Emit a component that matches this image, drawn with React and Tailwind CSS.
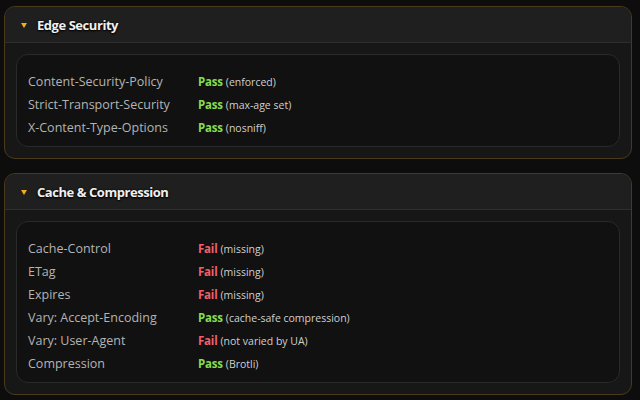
import React from 'react';

const sections = [
    {
        title: 'Edge Security',
        rows: [
            { label: 'Content-Security-Policy', ok: true, note: '(enforced)' },
            { label: 'Strict-Transport-Security', ok: true, note: '(max-age set)' },
            { label: 'X-Content-Type-Options', ok: true, note: '(nosniff)' },
        ],
    },
    {
        title: 'Cache & Compression',
        rows: [
            { label: 'Cache-Control', ok: false, note: '(missing)' },
            { label: 'ETag', ok: false, note: '(missing)' },
            { label: 'Expires', ok: false, note: '(missing)' },
            { label: 'Vary: Accept-Encoding', ok: true, note: '(cache-safe compression)' },
            { label: 'Vary: User-Agent', ok: false, note: '(not varied by UA)' },
            { label: 'Compression', ok: true, note: '(Brotli)' },
        ],
    },
];

const Section = ({ title, rows }) => (
    <div className="rounded-[11px] border border-[#4a3a1c] bg-[#171717] overflow-hidden">
        <div className="h-[36px] flex items-center bg-[#1f1f1f] border-b border-[#2e2e2e] pl-[16px] pt-[2px]">
            <svg width="6" height="5" viewBox="0 0 6 5" className="mr-[10px]">
                <path d="M0 0 H6 L3 5 Z" fill="#f0ad1c" />
            </svg>
            <span className="text-[13px] font-bold tracking-[-0.45px] text-[#f0f0f0] [text-shadow:0_0_2px_#000,0_1px_2px_#000]">{title}</span>
        </div>
        <div className="p-[11px]">
            <div className="rounded-[12px] border border-[#2a2a2a] bg-[#111111] pl-[11px] pt-[15px] pb-[7px]">
                {rows.map(r => (
                    <div key={r.label} className="flex items-baseline h-[23px] leading-[23px]">
                        <span className="w-[170px] shrink-0 text-[12.5px] text-[#b4b4b4]">{r.label}</span>
                        <span className={`text-[11.5px] tracking-[-0.2px] font-bold ${r.ok ? 'text-[#86dc4f]' : 'text-[#f0606a]'}`}>{r.ok ? 'Pass' : 'Fail'}</span>
                        <span className="ml-[3px] text-[10.5px] text-[#cfcfcf]">{r.note}</span>
                    </div>
                ))}
            </div>
        </div>
    </div>
);

export default function App() {
    return (
        <div className="min-h-[400px] w-[640px] bg-[#0d0d0d] pl-[4px] pr-[8px] pt-[6px] flex flex-col gap-[14px]" style={{ fontFamily: '"Open Sans", "Noto Sans", sans-serif' }}>
            {sections.map(s => <Section key={s.title} {...s} />)}
        </div>
    );
}
